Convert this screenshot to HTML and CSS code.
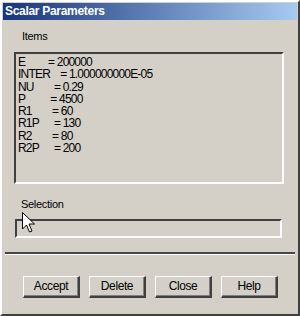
FILE: index.html
```html
<!DOCTYPE html>
<html>
<head>
<meta charset="utf-8">
<title>Scalar Parameters</title>
<link rel="stylesheet" href="styles.css">
</head>
<body>
<div class="window">
  <div class="titlebar">Scalar Parameters</div>
  <div class="label items-label">Items</div>
  <div class="listbox">
<pre class="list">E         = 200000
INTER    = 1.000000000E-05
NU        = 0.29
P          = 4500
R1        = 60
R1P      = 130
R2        = 80
R2P      = 200</pre>
  </div>
  <div class="label sel-label">Selection</div>
  <div class="field"></div>
  <div class="separator"></div>
  <div class="buttons">
    <div class="btn">Accept</div>
    <div class="btn">Delete</div>
    <div class="btn">Close</div>
    <div class="btn">Help</div>
  </div>
  <!-- mouse pointer over the selection field -->
  <svg class="cursor" width="14" height="22" viewBox="0 0 14 22">
    <polygon points="0.5,0.5 0.5,17 4.5,13 7.5,20 10,19 7,12 12.5,12" fill="#fff" stroke="#000" stroke-width="1"/>
  </svg>
</div>
</body>
</html>
```
FILE: styles.css
```css
body {
margin:0;
background:#d4d0c8;
font-family:"Liberation Sans",Arial,sans-serif;
font-size:11px;
color:#000;
}
.window {
position:relative;
width:300px;
height:316px;
box-sizing:border-box;
padding:1px;
border-style:solid;
border-width:2px;
border-color:#ffffff #404040 #404040 #ffffff;
background:#d4d0c8;
display:flex;
flex-direction:column;
}
.titlebar {
height:17px;
line-height:17px;
padding-left:2px;
background:linear-gradient(to right,#17357c,#a6caf0);
color:#fff;
font-weight:bold;
font-size:12px;
letter-spacing:-0.3px;
}
.label {
height:13px;
line-height:13px;
letter-spacing:-0.3px;
}
.items-label {
margin:10px 0 0 19px;
}
.listbox {
margin:9px 0 0 11px;
width:270px;
height:132px;
box-sizing:border-box;
border-style:solid;
border-width:2px;
border-color:#404040 #ffffff #ffffff #404040;
background:#d4d0c8;
}
.list {
margin:0;
padding:2px 0 0 2px;
font-family:"Liberation Sans",Arial,sans-serif;
font-size:12px;
line-height:12.3px;
letter-spacing:-0.8px;
white-space:pre;
}
.sel-label {
margin:14px 0 0 18px;
}
.field {
margin:8px 0 0 12px;
width:267px;
height:19px;
box-sizing:border-box;
border-style:solid;
border-width:2px;
border-color:#404040 #ffffff #ffffff #404040;
}
.separator {
margin:14px 0 0 2px;
width:290px;
height:2px;
background:#454545;
border-bottom:1px solid #ffffff;
}
.buttons {
margin:21px 0 0 20px;
display:flex;
gap:9px;
}
.btn {
width:57px;
height:22px;
box-sizing:border-box;
border-style:solid;
border-width:1px 2px 2px 1px;
border-color:#ffffff #404040 #404040 #ffffff;
box-shadow:inset -1px -1px 0 #808080;
text-align:center;
line-height:19px;
font-size:12px;
letter-spacing:-0.4px;
}
.cursor {
position:absolute;
left:20px;
top:210px;
}
```
